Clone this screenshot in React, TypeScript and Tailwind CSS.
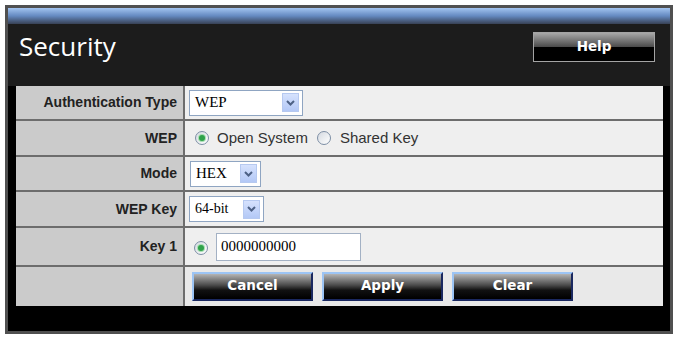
import React from 'react'

const sans = { fontFamily: '"Liberation Sans", Arial, sans-serif' }
const serif = { fontFamily: '"Liberation Serif", "Times New Roman", serif' }
const verdana = { fontFamily: '"DejaVu Sans", Verdana, sans-serif' }

function Select({ value, width, size = 'text-[15px]' }: { value: string; width: string; size?: string }) {
  return (
    <div className={`${width} h-[26px] border border-[#8fa5c2] bg-white flex items-center justify-between`}>
      <span className={`pl-[5px] ${size} text-black leading-none`} style={serif}>{value}</span>
      <span className="mr-[3px] w-[17px] h-[19px] border border-[#b6c9f0] bg-linear-to-b from-[#d6e2fd] to-[#b3c8f6] flex items-center justify-center">
        <svg width="9" height="6" viewBox="0 0 9 6">
          <path d="M1 1 L4.5 4.5 L8 1" fill="none" stroke="#4d6185" strokeWidth="2" />
        </svg>
      </span>
    </div>
  )
}

function Radio({ checked }: { checked?: boolean }) {
  return (
    <span className="w-[14px] h-[14px] rounded-full border border-[#7d8ea5] bg-linear-to-br from-[#d5dae1] to-white flex items-center justify-center shrink-0">
      {checked && <span className="w-[6px] h-[6px] rounded-full bg-[#2fa24a] shadow-[0_0_0_1px_#a6deb1]" />}
    </span>
  )
}

function BlueButton({ label }: { label: string }) {
  return (
    <button
      className="w-[121px] h-[29px] border-2 border-t-[#9cc4f4] border-l-[#9cc4f4] border-b-[#1a2860] border-r-[#1a2860] bg-[linear-gradient(to_bottom,#b4b4b4_0%,#4a4a4a_45%,#111_65%,#000_100%)] text-white font-bold text-[13.5px] leading-none flex items-center justify-center pb-[2px]"
      style={verdana}
    >
      {label}
    </button>
  )
}

function Row({ label, height, last, valueBg = 'bg-[#efefef]', children }: {
  label: string
  height: string
  last?: boolean
  valueBg?: string
  children?: React.ReactNode
}) {
  return (
    <div className={`flex ${height} ${last ? '' : 'border-b-2 border-[#6d6d6d]'}`}>
      <div className="w-[169px] shrink-0 bg-[#cbcbcb] border-r-2 border-[#6d6d6d] flex items-center justify-end pr-[6px] text-[14px] font-bold text-[#222]" style={sans}>
        {label}
      </div>
      <div className={`flex-1 ${valueBg} flex items-center`}>{children}</div>
    </div>
  )
}

export default function App() {
  return (
    <div className="bg-white w-[681px] h-[337px] pt-[5px] pl-[5px]">
      <div className="w-[668px] h-[329px] border-[3px] border-[#505050] bg-black flex flex-col">
        {/* title bar */}
        <div className="h-[16px] bg-linear-to-b from-[#a3c4f0] via-[#6489c0] to-[#384256]" />
        <div className="h-[62px] bg-[#1c1c1c] flex justify-between items-start pl-[11px] pr-[15px] pt-[8px]">
          <h1 className="mt-[1px] text-[26px] leading-none text-white" style={{ fontFamily: '"Open Sans", sans-serif' }}>Security</h1>
          <button
            className="w-[122px] h-[30px] border border-[#a4a4a4] bg-[linear-gradient(to_bottom,#a8a8a8_0%,#4a4a4a_50%,#000_50%,#000_100%)] text-white font-bold text-[13.5px] leading-none flex items-center justify-center"
            style={verdana}
          >
            Help
          </button>
        </div>

        {/* settings table */}
        <div className="pl-[8px] pr-[7px]">
          <div className="h-[220px] flex flex-col">
            <Row label="Authentication Type" height="h-[35px]">
              <div className="pl-[4px]"><Select value="WEP" width="w-[114px]" /></div>
            </Row>
            <Row label="WEP" height="h-[36px]">
              <div className="pl-[10px] flex items-center text-[15px] text-[#333]" style={sans}>
                <Radio checked />
                <span className="ml-[8px]">Open System</span>
                <span className="ml-[9px]"><Radio /></span>
                <span className="ml-[9px]">Shared Key</span>
              </div>
            </Row>
            <Row label="Mode" height="h-[35px]">
              <div className="pl-[5px]"><Select value="HEX" width="w-[71px]" /></div>
            </Row>
            <Row label="WEP Key" height="h-[36px]">
              <div className="pl-[4px]"><Select value="64-bit" width="w-[75px]" size="text-[14px]" /></div>
            </Row>
            <Row label="Key 1" height="h-[39px]">
              <div className="pl-[9px] flex items-center">
                <span className="mt-[2px]"><Radio checked /></span>
                <div className="ml-[8px] w-[145px] h-[28px] border border-[#a3b1c4] bg-white flex items-center pl-[4px] text-[15px] text-black" style={serif}>
                  0000000000
                </div>
              </div>
            </Row>
            <Row label="" height="h-[39px]" last valueBg="bg-[#e9e9e9]">
              <div className="pl-[7px] flex gap-[9px]">
                <BlueButton label="Cancel" />
                <BlueButton label="Apply" />
                <BlueButton label="Clear" />
              </div>
            </Row>
          </div>
        </div>
      </div>
    </div>
  )
}
